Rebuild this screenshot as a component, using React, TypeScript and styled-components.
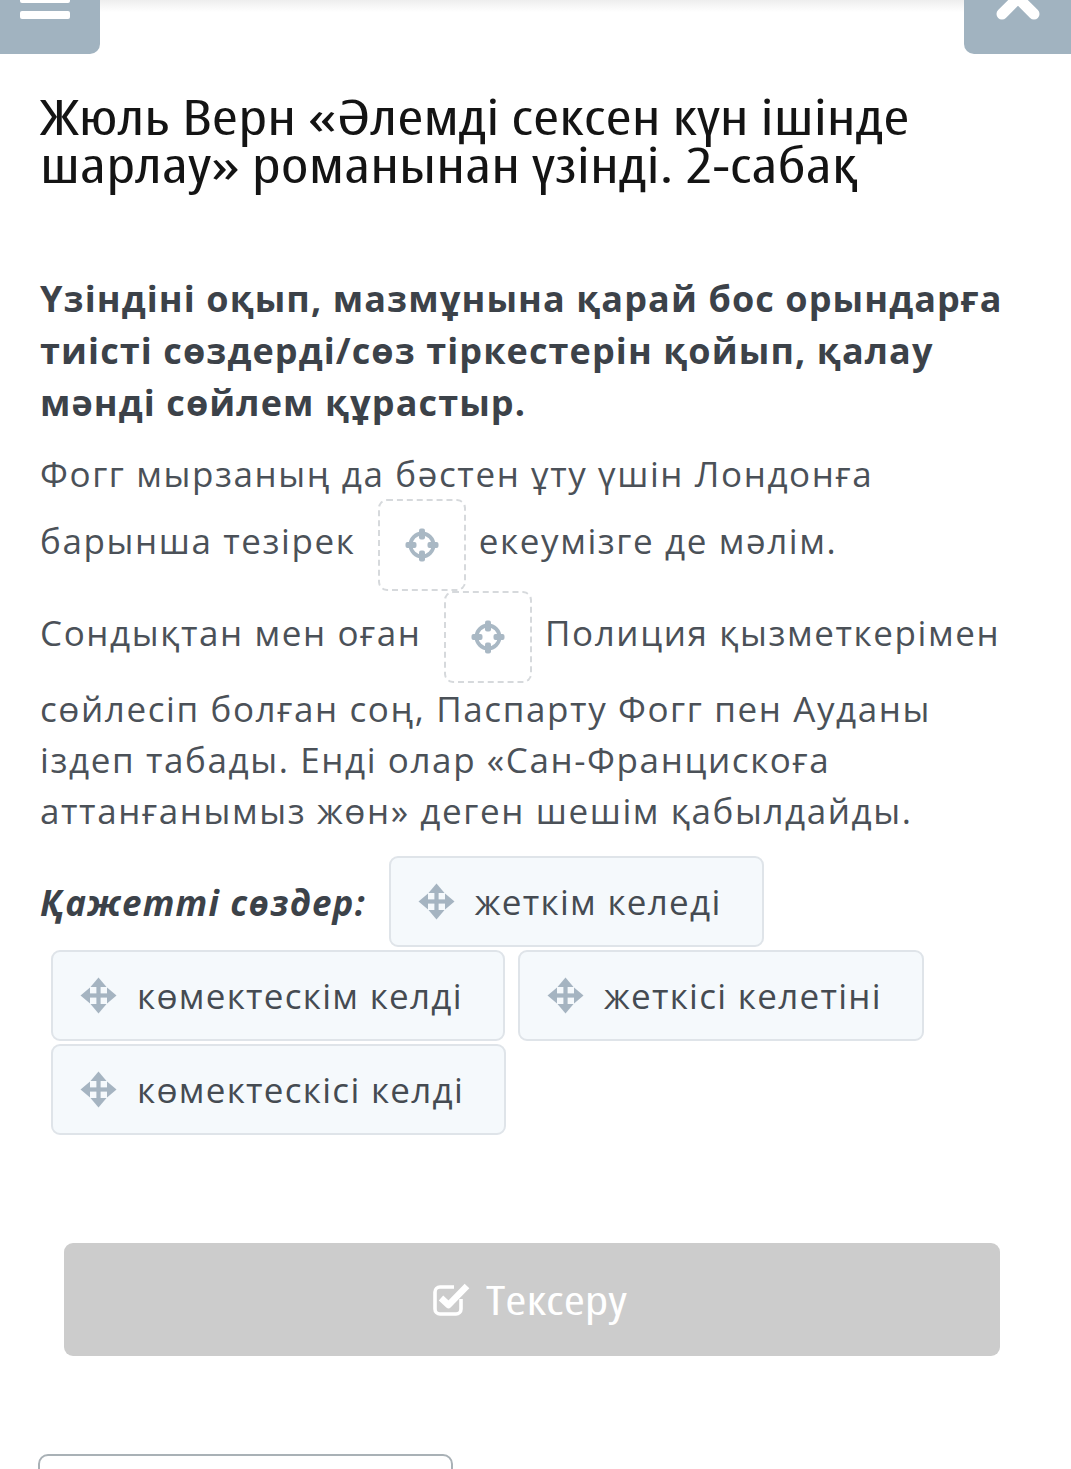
import React from "react";
import styled, { createGlobalStyle } from "styled-components";

const GlobalStyle = createGlobalStyle`
  body {
    margin: 0;
    background: #ffffff;
    font-family: "Open Sans", "Noto Sans", sans-serif;
  }
`;

type Word = { id: number; text: string };

const words: Word[] = [
  { id: 1, text: "жеткім келеді" },
  { id: 2, text: "көмектескім келді" },
  { id: 3, text: "жеткісі келетіні" },
  { id: 4, text: "көмектескісі келді" },
];

const CrosshairIcon = () => (
  <svg width="36" height="36" viewBox="0 0 36 36">
    <circle cx="18" cy="18" r="11.5" fill="none" stroke="#a9b8c4" strokeWidth="3.8" />
    <rect x="15" y="1.5" width="6" height="11" rx="2" fill="#a9b8c4" />
    <rect x="15" y="23.5" width="6" height="11" rx="2" fill="#a9b8c4" />
    <rect x="1.5" y="15" width="11" height="6" rx="2" fill="#a9b8c4" />
    <rect x="23.5" y="15" width="11" height="6" rx="2" fill="#a9b8c4" />
  </svg>
);

const MoveIcon = () => (
  <svg width="37" height="37" viewBox="0 0 37 37">
    <g fill="#a5b4c1">
      <rect x="16.4" y="8" width="4.2" height="21" />
      <rect x="8" y="16.4" width="21" height="4.2" />
      <path d="M18.5 0.5 L26.5 10 L10.5 10 Z" />
      <path d="M18.5 36.5 L26.5 27 L10.5 27 Z" />
      <path d="M0.5 18.5 L10 10.5 L10 26.5 Z" />
      <path d="M36.5 18.5 L27 10.5 L27 26.5 Z" />
    </g>
  </svg>
);

const CheckSquareIcon = () => (
  <svg width="40" height="36" viewBox="0 0 40 36">
    <path
      d="M29 17 V27 a5 5 0 0 1 -5 5 H8 a5 5 0 0 1 -5 -5 V10 a5 5 0 0 1 5 -5 H22"
      fill="none"
      stroke="#ffffff"
      strokeWidth="3.6"
    />
    <path d="M9 16 L16.5 23 L35 4" fill="none" stroke="#ffffff" strokeWidth="6.5" strokeLinejoin="round" />
  </svg>
);

const CloseIcon = () => (
  <svg width="50" height="50" viewBox="0 0 50 50">
    <path d="M9 9 L41 41 M41 9 L9 41" stroke="#ffffff" strokeWidth="11" strokeLinecap="round" />
  </svg>
);

export default function App() {
  return (
    <Page>
      <GlobalStyle />
      <TopBar>
        <CornerButton $side="left">
          <MenuBar />
          <MenuBar />
        </CornerButton>
        <CornerButton $side="right">
          <CloseSlot>
            <CloseIcon />
          </CloseSlot>
        </CornerButton>
      </TopBar>

      <Content>
        <Title>
          <TitleLine>Жюль Верн «Әлемді сексен күн ішінде</TitleLine>
          <TitleLine>шарлау» романынан үзінді. 2-сабақ</TitleLine>
        </Title>

        <Instruction>
          Үзіндіні оқып, мазмұнына қарай бос орындарға тиісті сөздерді/сөз тіркестерін қойып, қалау
          мәнді сөйлем құрастыр.
        </Instruction>

        <Passage>
          Фогг мырзаның да бәстен ұту үшін Лондонға барынша тезірек{" "}
          <DropZone>
            <CrosshairIcon />
          </DropZone>{" "}
          екеумізге де мәлім. Сондықтан мен оған{" "}
          <DropZone>
            <CrosshairIcon />
          </DropZone>{" "}
          Полиция қызметкерімен сөйлесіп болған соң, Паспарту Фогг пен Ауданы іздеп табады. Енді
          олар «Сан-Францискоға аттанғанымыз жөн» деген шешім қабылдайды.
        </Passage>

        <WordBank>
          <BankLabel>Қажетті сөздер:</BankLabel>
          {words.map((w) => (
            <Chip key={w.id}>
              <MoveIcon />
              <span>{w.text}</span>
            </Chip>
          ))}
        </WordBank>
      </Content>

      <CheckButton>
        <CheckSquareIcon />
        <ButtonLabel>Тексеру</ButtonLabel>
      </CheckButton>

      <BottomCard />
    </Page>
  );
}

const Page = styled.div`
  width: 1071px;
  height: 1469px;
  overflow: hidden;
`;

const TopBar = styled.div`
  display: flex;
  justify-content: space-between;
  height: 54px;
  background: linear-gradient(#eeeeee 0px, #ffffff 12px);
`;

const CornerButton = styled.div<{ $side: "left" | "right" }>`
  width: ${(p) => (p.$side === "left" ? "100px" : "107px")};
  height: 54px;
  background: #a1b3c0;
  border-radius: ${(p) => (p.$side === "left" ? "0 0 10px 0" : "0 0 0 10px")};
  display: flex;
  flex-direction: column;
  align-items: ${(p) => (p.$side === "left" ? "flex-start" : "center")};
  padding-left: ${(p) => (p.$side === "left" ? "20px" : "0")};
  box-sizing: border-box;
  overflow: hidden;
`;

const MenuBar = styled.div`
  width: 50px;
  height: 8px;
  background: #ffffff;
  border-radius: 2px;
  margin-top: -5px;
  margin-bottom: 8px;

  & + & {
    margin-top: 0;
  }
`;

const CloseSlot = styled.div`
  display: flex;
  margin-top: -27px;
  margin-left: 1px;
`;

const Content = styled.div`
  padding: 0 40px;
`;

const Title = styled.h1`
  margin: 38px 0 0;
  font-family: "Open Sans", sans-serif;
  font-stretch: 75%;
  font-weight: 400;
  font-size: 50px;
  line-height: 48px;
  color: #141414;
  white-space: nowrap;
`;

const TitleLine = styled.span`
  display: block;
  width: max-content;
  transform: scaleX(1.27);
  transform-origin: left center;
`;

const Instruction = styled.div`
  margin-top: 85px;
  font-size: 36px;
  letter-spacing: 1.1px;
  line-height: 52px;
  font-weight: 700;
  color: #3c4249;
`;

const Passage = styled.div`
  margin-top: 19px;
  font-size: 35px;
  letter-spacing: 1.6px;
  line-height: 51px;
  color: #4b5158;
`;

const DropZone = styled.span`
  display: inline-flex;
  align-items: center;
  justify-content: center;
  vertical-align: middle;
  width: 88px;
  height: 92px;
  box-sizing: border-box;
  margin: 0 2px 0 12px;
  border: 2px dashed #d6d9dc;
  border-radius: 9px;
`;

const WordBank = styled.div`
  margin-top: 19px;
  display: flex;
  flex-wrap: wrap;
  align-items: center;
`;

const BankLabel = styled.span`
  font-size: 35px;
  letter-spacing: 1.2px;
  font-weight: 700;
  font-style: italic;
  color: #3c4249;
  margin-right: 12px;
`;

const Chip = styled.div`
  display: flex;
  align-items: center;
  gap: 20px;
  height: 91px;
  box-sizing: border-box;
  margin: 1px 2px 2px 11px;
  padding: 0 40px 0 27px;
  background: #f5f9fc;
  border: 2px solid #dfe4e9;
  border-radius: 9px;
  font-size: 35px;
  letter-spacing: 1.3px;
  color: #454b52;
`;

const CheckButton = styled.div`
  margin: 106px 71px 0 64px;
  height: 113px;
  background: #cccccc;
  border-radius: 9px;
  display: flex;
  align-items: center;
  justify-content: center;
  gap: 14px;
  padding-right: 36px;
  box-sizing: border-box;
  color: #ffffff;
  font-family: "Open Sans", sans-serif;
  font-stretch: 75%;
  font-size: 40px;
`;

const ButtonLabel = styled.span`
  display: inline-block;
  transform: scaleX(1.28);
  transform-origin: left center;
`;

const BottomCard = styled.div`
  margin: 98px 0 0 38px;
  width: 415px;
  height: 60px;
  box-sizing: border-box;
  border: 2px solid #a9b1b6;
  border-radius: 10px;
`;
